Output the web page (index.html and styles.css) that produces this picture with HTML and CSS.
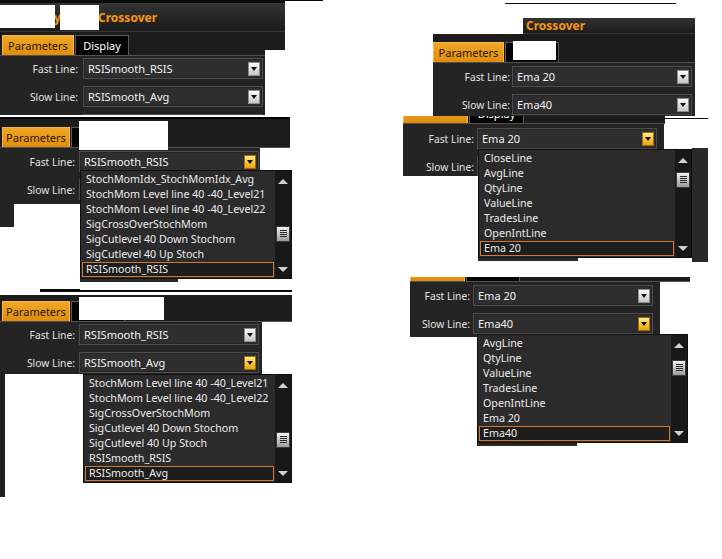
FILE: index.html
```html
<!DOCTYPE html>
<html>
<head>
<meta charset="utf-8">
<title>Crossover parameters</title>
<link rel="stylesheet" href="styles.css">
</head>
<body>
<div class="canvas">

  <!-- fragment A (top left) -->
  <div class="piece black strip-a"></div>
  <div class="piece black rule-a"></div>
  <section class="piece win win-a">
    <header class="hdr"><span class="ttl lead">y</span><span class="ttl">Crossover</span></header>
    <nav class="tabbar"><span class="tab on">Parameters</span><span class="tab">Display</span></nav>
    <div class="body">
      <div class="row"><span class="lbl">Fast Line:</span><div class="sel"><span>RSISmooth_RSIS</span><i class="btn"></i></div></div>
      <div class="row"><span class="lbl">Slow Line:</span><div class="sel"><span>RSISmooth_Avg</span><i class="btn"></i></div></div>
      <div class="row"><span class="lbl"></span><div class="sel"></div></div>
    </div>
  </section>
  <div class="piece mask m-a1"></div>
  <div class="piece mask m-a2"></div>
  <div class="piece mask m-a3"></div>

  <!-- fragment B (top right) -->
  <div class="piece black rule-b"></div>
  <header class="piece hdr hdr-b"><span class="ttl">Crossover</span></header>
  <section class="piece win win-b">
    <nav class="tabbar"><span class="tab on">Parameters</span><span class="tab">Display</span></nav>
    <div class="body">
      <div class="row"><span class="lbl">Fast Line:</span><div class="sel"><span>Ema 20</span><i class="btn"></i></div></div>
      <div class="row"><span class="lbl">Slow Line:</span><div class="sel"><span>Ema40</span><i class="btn"></i></div></div>
    </div>
  </section>
  <div class="piece mask m-b1"></div>

  <!-- fragment C (middle left) -->
  <section class="piece win-c">
    <nav class="tabbar"><span class="tab on">Parameters</span><span class="tab">Display</span></nav>
    <div class="body">
      <div class="row"><span class="lbl">Fast Line:</span><div class="sel"><span>RSISmooth_RSIS</span><i class="btn hot"></i></div></div>
      <div class="row"><span class="lbl">Slow Line:</span><div class="sel"></div></div>
    </div>
    <div class="tail"></div>
  </section>
  <div class="piece mask m-c1"></div>
  <div class="piece under u-c"></div>
  <div class="piece dd dd-c">
    <ul class="items">
      <li>StochMomIdx_StochMomIdx_Avg</li>
      <li>StochMom Level line 40 -40_Level21</li>
      <li>StochMom Level line 40 -40_Level22</li>
      <li>SigCrossOverStochMom</li>
      <li>SigCutlevel 40 Down Stochom</li>
      <li>SigCutlevel 40 Up Stoch</li>
      <li class="cur">RSISmooth_RSIS</li>
    </ul>
    <div class="sb"><i class="arrow up"></i><i class="thumb" style="top:55px"></i><i class="arrow dn"></i></div>
  </div>
  <div class="piece black rule-c"></div>
  <div class="piece black rule-d"></div>

  <!-- fragment D (bottom left) -->
  <section class="piece win-d">
    <nav class="tabbar"><span class="tab on">Parameters</span><span class="tab">Display</span></nav>
    <div class="body">
      <div class="row"><span class="lbl">Fast Line:</span><div class="sel"><span>RSISmooth_RSIS</span><i class="btn"></i></div></div>
      <div class="row"><span class="lbl">Slow Line:</span><div class="sel"><span>RSISmooth_Avg</span><i class="btn hot"></i></div></div>
    </div>
  </section>
  <div class="piece mask m-d1"></div>
  <div class="piece edge-d"></div>
  <div class="piece dd dd-d">
    <ul class="items">
      <li>StochMom Level line 40 -40_Level21</li>
      <li>StochMom Level line 40 -40_Level22</li>
      <li>SigCrossOverStochMom</li>
      <li>SigCutlevel 40 Down Stochom</li>
      <li>SigCutlevel 40 Up Stoch</li>
      <li>RSISmooth_RSIS</li>
      <li class="cur">RSISmooth_Avg</li>
    </ul>
    <div class="sb"><i class="arrow up"></i><i class="thumb" style="top:57px"></i><i class="arrow dn"></i></div>
  </div>

  <!-- fragment E (middle right) -->
  <nav class="piece tabbar tabs-e"><span class="tab on"></span><span class="tab">Display</span></nav>
  <div class="piece black rule-e"></div>
  <section class="piece win win-e">
    <div class="body">
      <div class="row"><span class="lbl">Fast Line:</span><div class="sel"><span>Ema 20</span><i class="btn hot"></i></div></div>
      <div class="row"><span class="lbl">Slow Line:</span><div class="sel"></div></div>
    </div>
  </section>
  <div class="piece under col-e"></div>
  <div class="piece under u-e"></div>
  <div class="piece dd dd-e">
    <ul class="items">
      <li>CloseLine</li>
      <li>AvgLine</li>
      <li>QtyLine</li>
      <li>ValueLine</li>
      <li>TradesLine</li>
      <li>OpenIntLine</li>
      <li class="cur">Ema 20</li>
    </ul>
    <div class="sb"><i class="arrow up"></i><i class="thumb" style="top:22px"></i><i class="arrow dn"></i></div>
  </div>

  <!-- fragment F (bottom right) -->
  <nav class="piece tabbar tabs-f"><span class="tab on"></span><span class="tab"></span></nav>
  <section class="piece win win-f">
    <div class="body">
      <div class="row"><span class="lbl">Fast Line:</span><div class="sel"><span>Ema 20</span><i class="btn"></i></div></div>
      <div class="row"><span class="lbl">Slow Line:</span><div class="sel"><span>Ema40</span><i class="btn hot"></i></div></div>
    </div>
  </section>
  <div class="piece under u-f"></div>
  <div class="piece dd dd-f">
    <ul class="items">
      <li>AvgLine</li>
      <li>QtyLine</li>
      <li>ValueLine</li>
      <li>TradesLine</li>
      <li>OpenIntLine</li>
      <li>Ema 20</li>
      <li class="cur">Ema40</li>
    </ul>
    <div class="sb"><i class="arrow up"></i><i class="thumb" style="top:25px"></i><i class="arrow dn"></i></div>
  </div>

</div>
</body>
</html>
```

FILE: styles.css
```css
* { box-sizing: border-box; margin: 0; padding: 0; }
html, body { background: #fff; }
body {
  margin: 0;
  font-family: "Noto Sans", "Open Sans", sans-serif;
  font-size: 10.7px;
  color: #e8e8e8;
}
.canvas { position: relative; width: 722px; height: 559px; overflow: hidden; }
.piece { position: absolute; }
.mask { background: #fff; }
.black { background: #0b0b0b; }
.under { background: #292929; }

/* window parts */
.win { display: flex; flex-direction: column; background: #242424; overflow: hidden; }
.hdr {
  display: flex; align-items: center; flex: none;
  background: linear-gradient(#333333, #1b1b1b);
  border-bottom: 1px solid #3a3a3a;
}
.ttl { color: #f0981a; font-weight: 700; font-size: 12px; text-shadow: 0 0 1px #5a3000; }
.tabbar {
  display: flex; align-items: flex-end; gap: 1px; flex: none;
  background: #1c1c1c; border-bottom: 1px solid #505050; padding-left: 2px;
}
.tab {
  height: 20px; width: 54px; flex: none;
  display: flex; align-items: center; justify-content: center;
  background: #050505; border: 1px solid #5a5a5a; border-bottom: none;
  color: #fff; font-size: 11px;
}
.tab.on {
  background: linear-gradient(#f0a628, #df8e0b);
  border-color: #f4b848; color: #2a1600;
}
.body { display: flex; flex-direction: column; gap: 7px; padding-top: 2px; background: #242424; flex: none; }
.row { display: flex; align-items: center; gap: 5px; flex: none; }
.lbl { width: 78px; flex: none; text-align: right; color: #e0e0e0; white-space: nowrap; font-size: 10.3px; }
.sel {
  width: 180px; height: 21px; flex: none;
  display: flex; align-items: center; justify-content: space-between;
  padding: 0 2px 0 4px;
  background: #2e2e2e; border: 1px solid #4d4d4d;
  box-shadow: inset 0 0 0 1px #272727;
  color: #f2f2f2; white-space: nowrap; font-size: 11px;
}
.btn {
  width: 12px; height: 14px; flex: none; margin-left: auto;
  display: flex; align-items: center; justify-content: center;
  background: linear-gradient(#fcfcfc, #c6c6c6); border: 1px solid #8c8c8c;
}
.btn::after {
  content: ""; width: 0; height: 0;
  border-left: 3px solid transparent; border-right: 3px solid transparent;
  border-top: 4px solid #111;
}
.btn.hot { background: linear-gradient(#ffea8e, #e8a30e); border-color: #a76a00; }

/* dropdown list */
.dd { display: flex; height: 109px; background: #2b2b2b; border: 1px solid #0f0f0f; }
.items { flex: 1; min-width: 0; list-style: none; padding: 1px; }
.items li {
  height: 15px; line-height: 13px; padding-left: 3px;
  border: 1px solid transparent;
  white-space: nowrap; overflow: hidden; color: #ececec;
}
.items li.cur { border-color: #d2782e; background: #1d1d1d; }
.sb {
  width: 16px; flex: none; position: relative;
  display: flex; flex-direction: column; align-items: center;
  padding: 8px 0 6px; background: #181818;
}
.arrow { display: block; width: 0; height: 0; border-left: 5px solid transparent; border-right: 5px solid transparent; }
.up { border-bottom: 5px solid #d0d0d0; }
.dn { border-top: 5px solid #d0d0d0; margin-top: auto; }
.thumb {
  position: absolute; left: 1px; width: 14px; height: 16px;
  background: linear-gradient(#f2f2f2, #9a9a9a);
  border: 1px solid #3c3c3c;
}
.thumb::after {
  content: ""; position: absolute; left: 3px; right: 2px; top: 3px; bottom: 3px;
  background: repeating-linear-gradient(#2a2a2a 0 1px, transparent 1px 2px);
}

/* fragment A */
.strip-a { left: 0; top: 0; width: 285px; height: 3px; }
.rule-a { left: 285px; top: 0; width: 38px; height: 1px; }
.win-a { left: 0; top: 3px; width: 285px; height: 112px; }
.win-a .hdr { height: 29px; padding-left: 54px; }
.win-a .lead { width: 44px; }
.win-a .tabbar { height: 24px; }
.win-a .tab.on { width: 72px; }
.m-a1 { left: 0; top: 5px; width: 55px; height: 23px; }
.m-a2 { left: 60px; top: 5px; width: 39px; height: 25px; }
.m-a3 { left: 265px; top: 50px; width: 20px; height: 65px; }

/* fragment B */
.rule-b { left: 505px; top: 3px; width: 171px; height: 1px; }
.hdr-b { left: 523px; top: 18px; width: 172px; height: 16px; padding-left: 3px; }
.win-b { left: 433px; top: 34px; width: 262px; height: 82px; }
.win-b .tabbar { height: 29px; padding-left: 0; }
.win-b .tab.on { width: 71px; }
.win-b .body { padding-top: 3px; }
.win-b .lbl { width: 77px; }
.win-b .row { gap: 2px; }
.m-b1 { left: 513px; top: 41px; width: 43px; height: 19px; }

/* fragment C */
.win-c { left: 0; top: 117px; display: flex; flex-direction: column; align-items: flex-start; }
.win-c .tabbar { width: 290px; height: 31px; border-top: 2px solid #050505; }
.win-c .tab.on { width: 68px; }
.win-c .body { width: 260px; height: 56px; padding-top: 3px; }
.win-c .lbl { width: 75px; }
.win-c .row { gap: 4px; }
.tail { width: 14px; height: 23px; background: #242424; }
.m-c1 { left: 79px; top: 121px; width: 89px; height: 29px; }
.u-c { left: 80px; top: 279px; width: 98px; height: 3px; }
.dd-c { left: 80px; top: 170px; width: 212px; }
.rule-c { left: 40px; top: 289px; width: 40px; height: 1px; }
.rule-d { left: 40px; top: 290px; width: 252px; height: 2px; }

/* fragment D */
.win-d { left: 0; top: 295px; display: flex; flex-direction: column; align-items: flex-start; }
.win-d .tabbar { width: 292px; height: 27px; }
.win-d .tab.on { width: 68px; }
.win-d .body { width: 262px; height: 52px; }
.win-d .lbl { width: 75px; }
.win-d .row { gap: 4px; }
.m-d1 { left: 79px; top: 297px; width: 85px; height: 23px; }
.edge-d { left: 0; top: 373px; width: 5px; height: 124px; background: #1e1e1e; }
.dd-d { left: 83px; top: 374px; width: 209px; }

/* fragment E */
.tabs-e { left: 403px; top: 116px; width: 262px; height: 8px; overflow: hidden; padding-left: 0; }
.tabs-e .tab.on { width: 65px; }
.tabs-e .tab { width: 55px; }
.rule-e { left: 665px; top: 118px; width: 43px; height: 1px; }
.win-e { left: 403px; top: 124px; width: 261px; height: 52px; }
.win-e .body { padding-top: 4px; }
.win-e .lbl { width: 71px; }
.win-e .row { gap: 3px; }
.col-e { left: 692px; top: 148px; width: 16px; height: 114px; }
.u-e { left: 478px; top: 258px; width: 100px; height: 3px; }
.dd-e { left: 478px; top: 149px; width: 214px; }

/* fragment F */
.tabs-f { left: 410px; top: 277px; width: 280px; height: 5px; overflow: hidden; padding-left: 0; }
.tabs-f .tab.on { width: 55px; }
.win-f { left: 410px; top: 282px; width: 250px; height: 55px; }
.win-f .body { padding-top: 3px; }
.win-f .lbl { width: 60px; }
.win-f .row { gap: 3px; }
.u-f { left: 477px; top: 443px; width: 100px; height: 3px; }
.dd-f { left: 477px; top: 334px; width: 211px; }
```
